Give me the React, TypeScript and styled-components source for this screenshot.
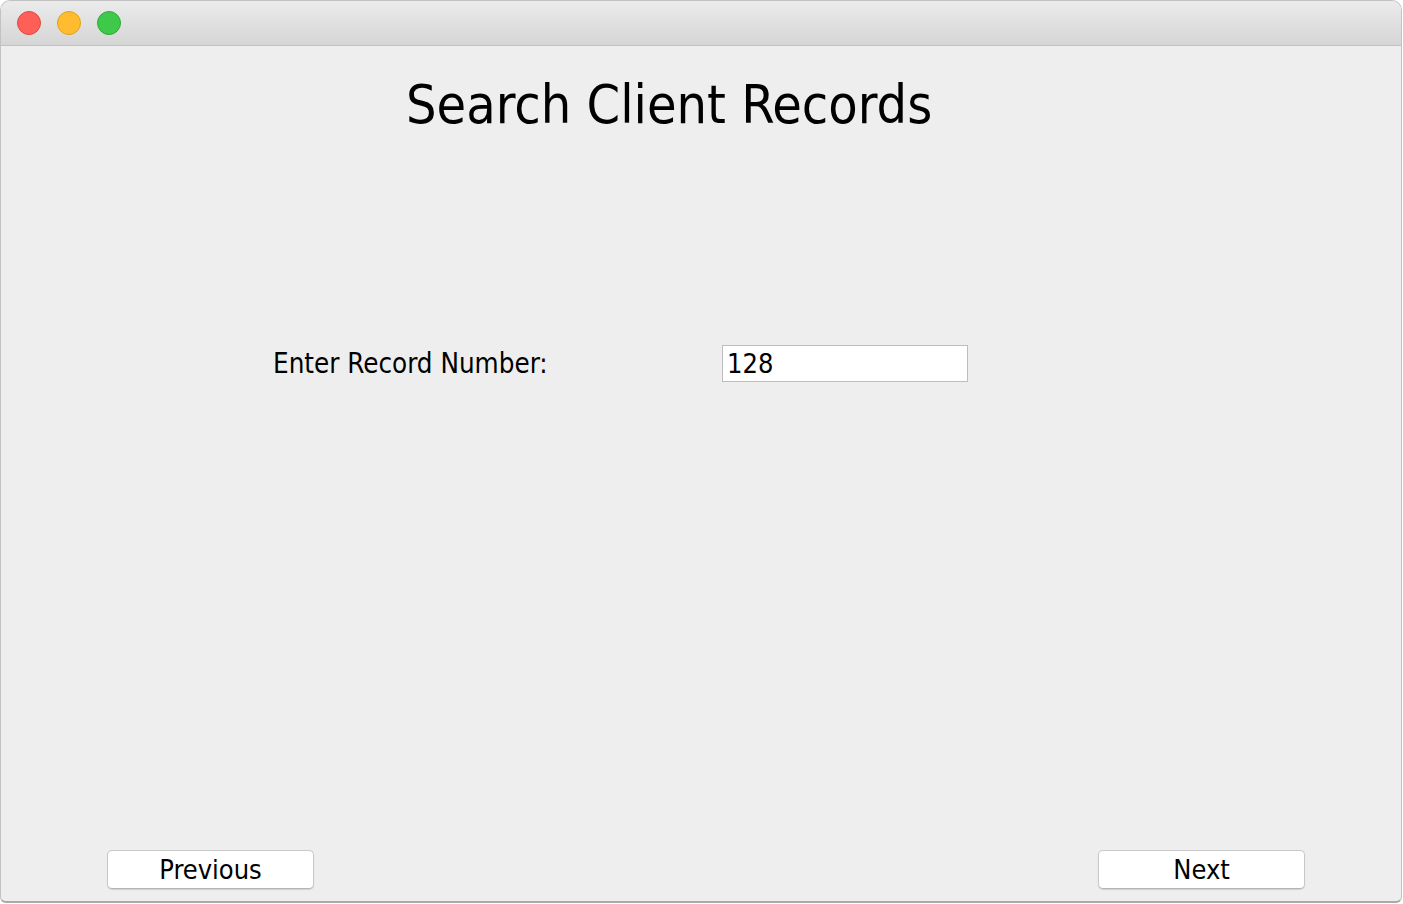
import React from "react";
import styled, { createGlobalStyle } from "styled-components";

const GlobalStyle = createGlobalStyle`
  html, body { margin: 0; padding: 0; background: #ffffff; }
  body { font-family: "DejaVu Sans Condensed", "DejaVu Sans", sans-serif; color: #000; }
  * { box-sizing: border-box; }
`;

const Window = styled.div`
  width: 1402px;
  height: 903px;
  display: flex;
  flex-direction: column;
  background: #eeeeee;
  border: 1px solid #c2c2c2;
  border-bottom: 2px solid #a9a9a9;
  border-radius: 10px 10px 6px 6px;
  overflow: hidden;
`;

const TitleBar = styled.div`
  height: 45px;
  flex: none;
  display: flex;
  align-items: center;
  gap: 16px;
  padding: 0 0 1px 16px;
  background: linear-gradient(to bottom, #ebebeb, #d5d5d5);
  border-bottom: 1px solid #c1c1c1;
`;

const Light = styled.span<{ $fill: string; $edge: string }>`
  width: 24px;
  height: 24px;
  border-radius: 50%;
  background: ${(p) => p.$fill};
  border: 1px solid ${(p) => p.$edge};
`;

const Content = styled.div`
  flex: 1;
  display: flex;
  flex-direction: column;
`;

const Heading = styled.h1`
  margin: 32px 0 0 0;
  padding-left: 405px;
  font-family: "DejaVu Sans Condensed", "DejaVu Sans", sans-serif;
  font-weight: normal;
  font-size: 53.5px;
  line-height: 1;
  white-space: nowrap;
`;

const FormRow = styled.div`
  margin-top: 213px;
  height: 37px;
  display: flex;
  align-items: center;
  padding-left: 272px;
`;

const Label = styled.label`
  width: 449px;
  font-size: 27.5px;
  line-height: 37px;
  white-space: nowrap;
`;

const Field = styled.input`
  width: 246px;
  height: 37px;
  border: 1px solid #bdbdbd;
  background: #ffffff;
  padding: 0 4px;
  font-family: "DejaVu Sans Condensed", "DejaVu Sans", sans-serif;
  font-size: 27px;
  color: #000;
  outline: none;
`;

const ButtonBar = styled.div`
  margin-top: auto;
  display: flex;
  justify-content: space-between;
  padding: 0 96px 12px 106px;
`;

const NavButton = styled.button`
  width: 207px;
  height: 39px;
  display: flex;
  align-items: center;
  justify-content: center;
  background: #ffffff;
  border: 1px solid #c8c8c8;
  border-bottom-color: #b4b4b4;
  border-radius: 5px;
  box-shadow: 0 1px 1px rgba(0, 0, 0, 0.12);
  font-family: "DejaVu Sans Condensed", "DejaVu Sans", sans-serif;
  font-size: 27px;
  color: #000;
  padding: 0;
`;

export default function App() {
  return (
    <>
      <GlobalStyle />
      <Window>
        <TitleBar>
          <Light $fill="#fe5f57" $edge="#e2463f" />
          <Light $fill="#febc2e" $edge="#e1a116" />
          <Light $fill="#3fc94b" $edge="#2aac34" />
        </TitleBar>
        <Content>
          <Heading>Search Client Records</Heading>
          <FormRow>
            <Label htmlFor="record">Enter Record Number:</Label>
            <Field id="record" defaultValue="128" />
          </FormRow>
          <ButtonBar>
            <NavButton>Previous</NavButton>
            <NavButton>Next</NavButton>
          </ButtonBar>
        </Content>
      </Window>
    </>
  );
}
